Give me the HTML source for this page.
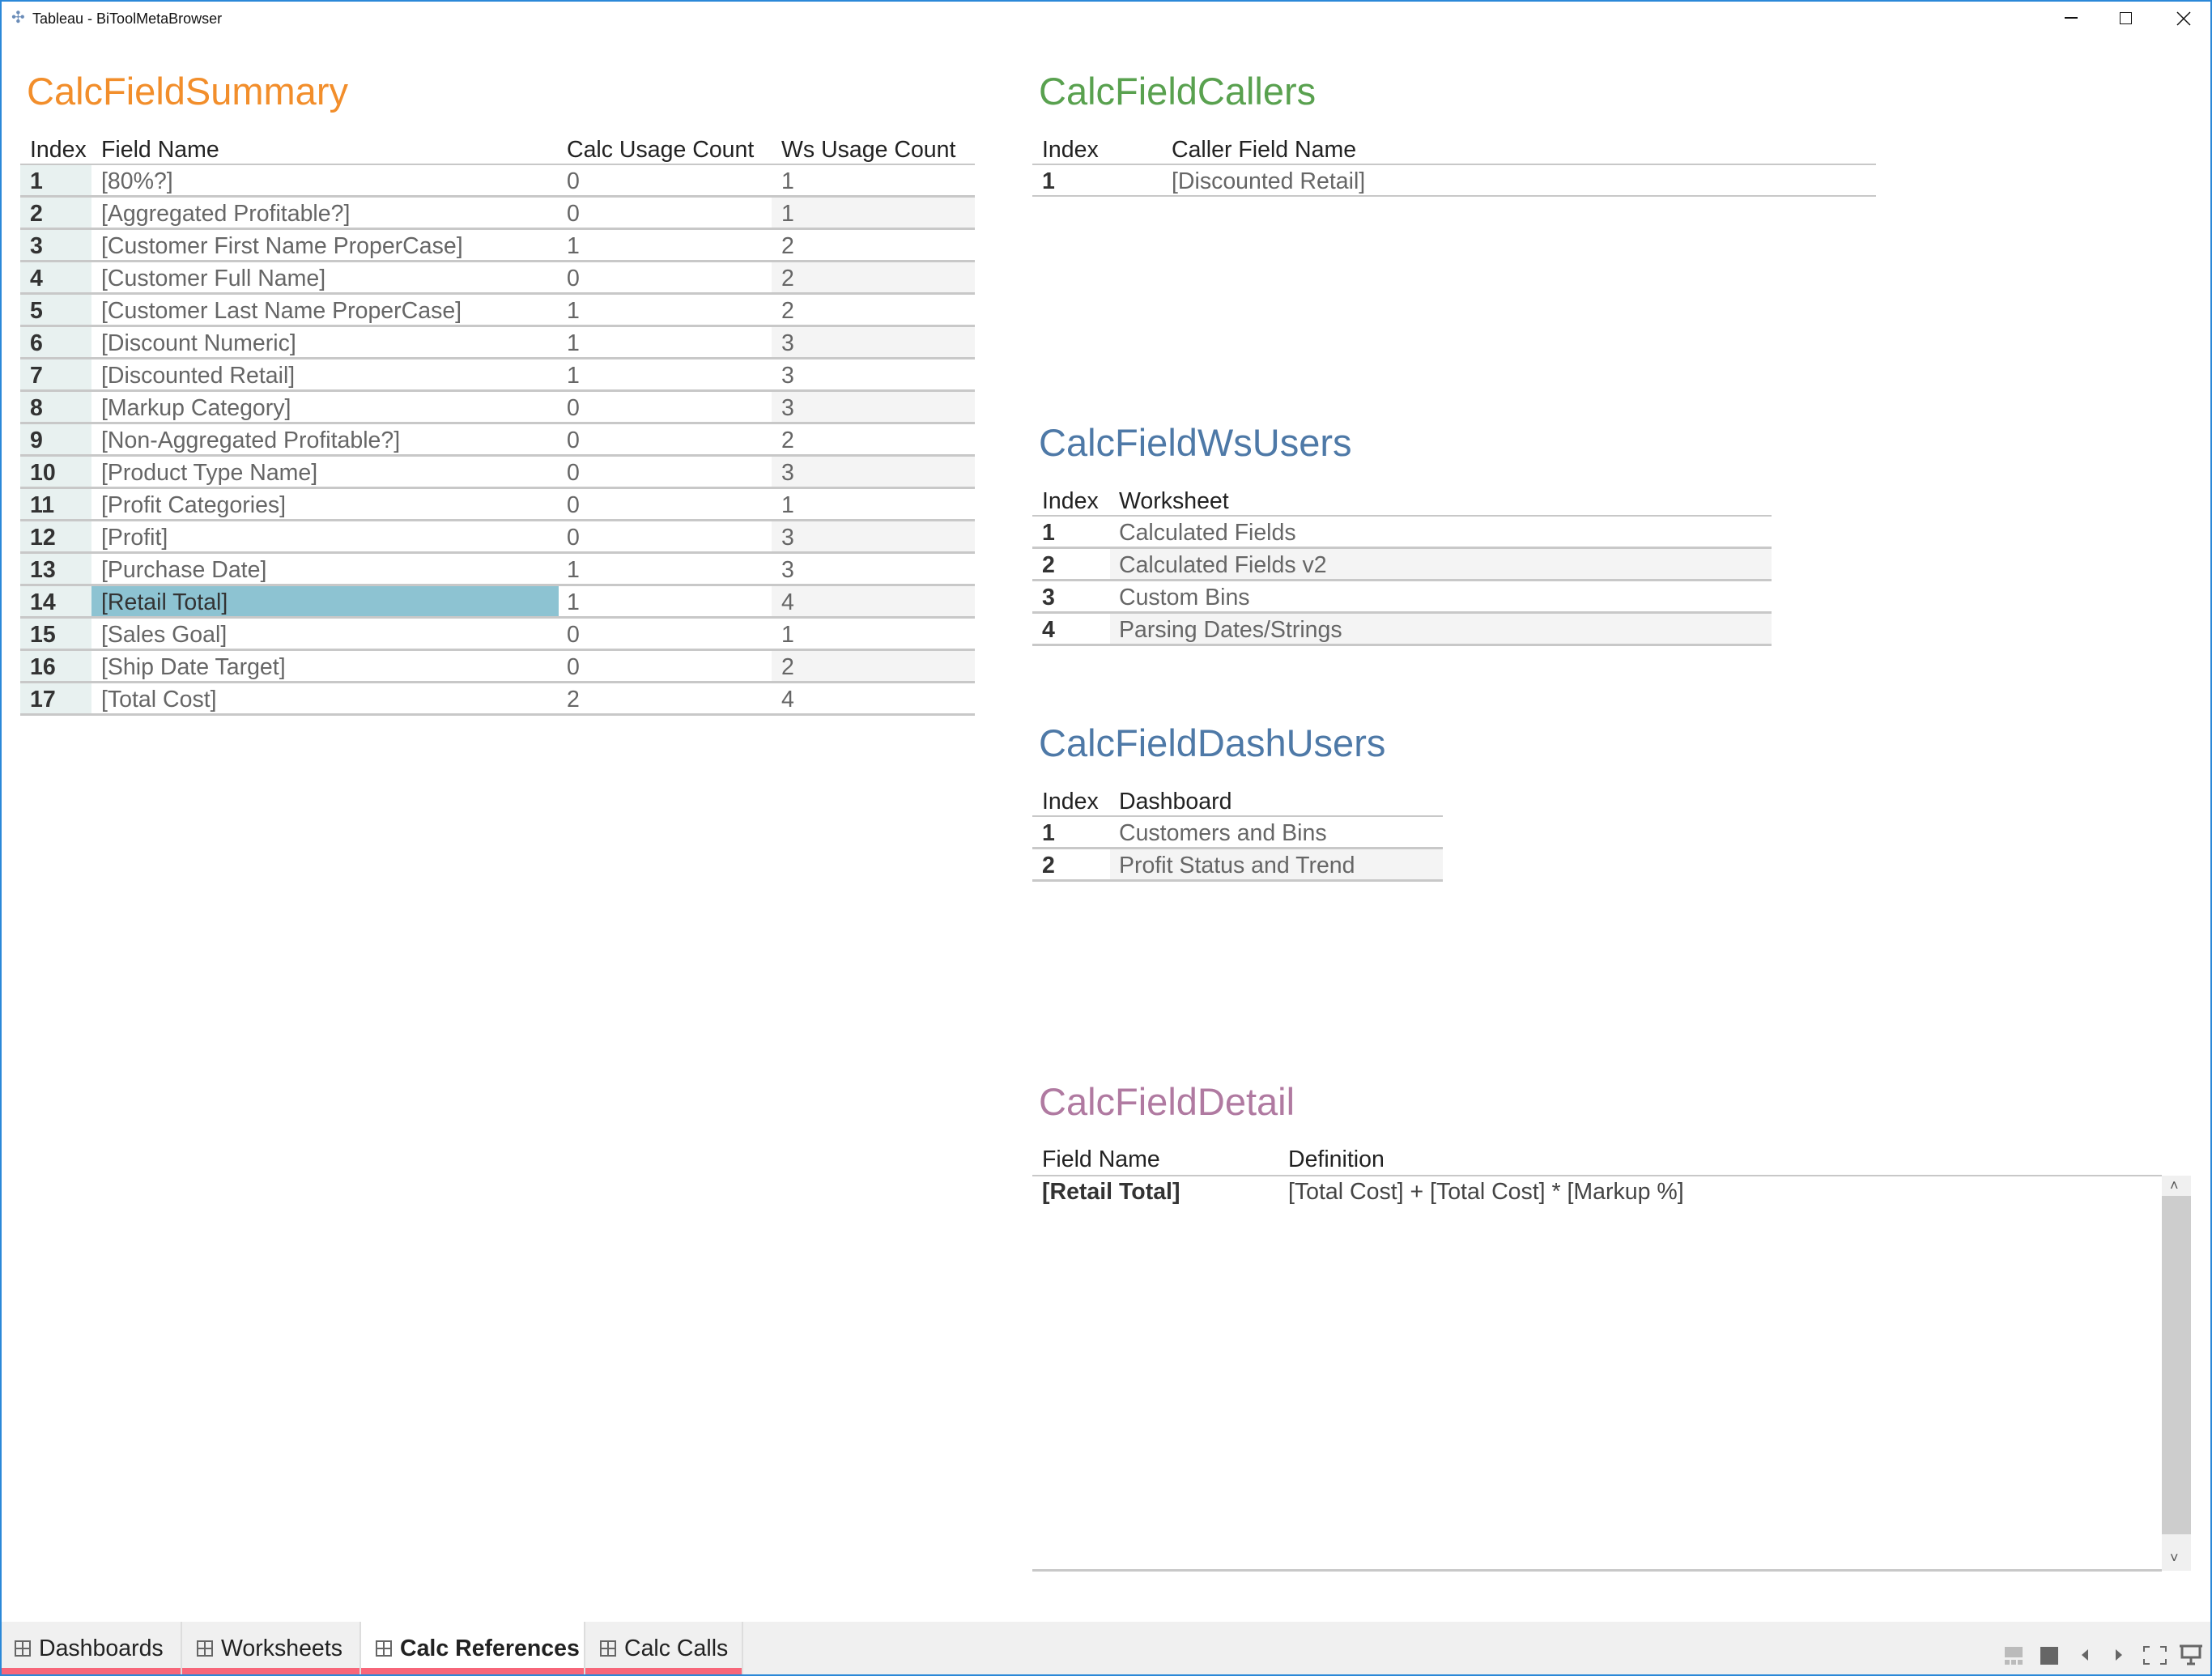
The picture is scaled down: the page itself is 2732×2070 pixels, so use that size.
<!DOCTYPE html>
<html><head><meta charset="utf-8"><style>
*{margin:0;padding:0;box-sizing:border-box}
body{width:2732px;height:2070px;position:relative;background:#fff;font-family:"Liberation Sans",sans-serif;overflow:hidden}
.a{position:absolute;white-space:nowrap}
.t{font-size:47px;line-height:54px}
.h{font-size:28.5px;color:#222;line-height:40px}
.c{font-size:28.5px;color:#666;line-height:40px}
.i{font-size:28.5px;color:#333;line-height:40px;font-weight:bold}
.ln{position:absolute;height:3px;background:#c8c8c8}
.bg{position:absolute}
.tab{position:absolute;top:2003px;height:67px;font-size:28.5px;line-height:66px;color:#222;padding-left:18px}
.tab span.ic{display:inline-block;width:20px;height:20px;border:2px solid #666;vertical-align:-1px;margin-right:10px;background:linear-gradient(#666,#666) 50% 0/2px 100% no-repeat,linear-gradient(#666,#666) 0 50%/100% 2px no-repeat}
</style></head><body>
<!-- title bar -->
<div class="a" style="left:14px;top:11px;width:22px;height:22px;color:#6a8cb8;font-size:20px;line-height:22px">✣</div>
<div class="a" style="left:40px;top:10px;font-size:18px;color:#111;line-height:26px">Tableau - BiToolMetaBrowser</div>
<div class="a" style="left:2550px;top:21px;width:16px;height:1.5px;background:#111"></div>
<div class="a" style="left:2618px;top:15px;width:15px;height:15px;border:1.5px solid #111"></div>
<svg class="a" style="left:2688px;top:14px" width="18" height="18"><path d="M1 1L17 17M17 1L1 17" stroke="#111" stroke-width="1.5"/></svg>

<!-- Summary -->
<div class="a t" style="left:33px;top:86px;color:#f28e2b">CalcFieldSummary</div>
<div class="bg" style="left:25px;top:203px;width:88px;height:680px;background:#e8f1f0"></div>
<div class="bg" style="left:953px;top:243px;width:251px;height:40px;background:#f4f4f4"></div>
<div class="bg" style="left:953px;top:323px;width:251px;height:40px;background:#f4f4f4"></div>
<div class="bg" style="left:953px;top:403px;width:251px;height:40px;background:#f4f4f4"></div>
<div class="bg" style="left:953px;top:483px;width:251px;height:40px;background:#f4f4f4"></div>
<div class="bg" style="left:953px;top:563px;width:251px;height:40px;background:#f4f4f4"></div>
<div class="bg" style="left:953px;top:643px;width:251px;height:40px;background:#f4f4f4"></div>
<div class="bg" style="left:953px;top:723px;width:251px;height:40px;background:#f4f4f4"></div>
<div class="bg" style="left:953px;top:803px;width:251px;height:40px;background:#f4f4f4"></div>
<div class="bg" style="left:113px;top:723px;width:577px;height:40px;background:#8dc3d2"></div>
<div class="a h" style="left:37px;top:165px">Index</div>
<div class="a h" style="left:125px;top:165px">Field Name</div>
<div class="a h" style="left:700px;top:165px">Calc Usage Count</div>
<div class="a h" style="left:965px;top:165px">Ws Usage Count</div>
<div class="ln" style="left:25px;width:1179px;top:202px;height:2px"></div>
<div style="position:absolute;left:0;top:204px">
<div style="position:relative;height:40px"><div class="a i" style="left:37px">1</div><div class="a c" style="left:125px">[80%?]</div><div class="a c" style="left:700px">0</div><div class="a c" style="left:965px">1</div><div class="ln" style="left:25px;width:1179px;top:37px"></div></div>
<div style="position:relative;height:40px"><div class="a i" style="left:37px">2</div><div class="a c" style="left:125px">[Aggregated Profitable?]</div><div class="a c" style="left:700px">0</div><div class="a c" style="left:965px">1</div><div class="ln" style="left:25px;width:1179px;top:37px"></div></div>
<div style="position:relative;height:40px"><div class="a i" style="left:37px">3</div><div class="a c" style="left:125px">[Customer First Name ProperCase]</div><div class="a c" style="left:700px">1</div><div class="a c" style="left:965px">2</div><div class="ln" style="left:25px;width:1179px;top:37px"></div></div>
<div style="position:relative;height:40px"><div class="a i" style="left:37px">4</div><div class="a c" style="left:125px">[Customer Full Name]</div><div class="a c" style="left:700px">0</div><div class="a c" style="left:965px">2</div><div class="ln" style="left:25px;width:1179px;top:37px"></div></div>
<div style="position:relative;height:40px"><div class="a i" style="left:37px">5</div><div class="a c" style="left:125px">[Customer Last Name ProperCase]</div><div class="a c" style="left:700px">1</div><div class="a c" style="left:965px">2</div><div class="ln" style="left:25px;width:1179px;top:37px"></div></div>
<div style="position:relative;height:40px"><div class="a i" style="left:37px">6</div><div class="a c" style="left:125px">[Discount Numeric]</div><div class="a c" style="left:700px">1</div><div class="a c" style="left:965px">3</div><div class="ln" style="left:25px;width:1179px;top:37px"></div></div>
<div style="position:relative;height:40px"><div class="a i" style="left:37px">7</div><div class="a c" style="left:125px">[Discounted Retail]</div><div class="a c" style="left:700px">1</div><div class="a c" style="left:965px">3</div><div class="ln" style="left:25px;width:1179px;top:37px"></div></div>
<div style="position:relative;height:40px"><div class="a i" style="left:37px">8</div><div class="a c" style="left:125px">[Markup Category]</div><div class="a c" style="left:700px">0</div><div class="a c" style="left:965px">3</div><div class="ln" style="left:25px;width:1179px;top:37px"></div></div>
<div style="position:relative;height:40px"><div class="a i" style="left:37px">9</div><div class="a c" style="left:125px">[Non-Aggregated Profitable?]</div><div class="a c" style="left:700px">0</div><div class="a c" style="left:965px">2</div><div class="ln" style="left:25px;width:1179px;top:37px"></div></div>
<div style="position:relative;height:40px"><div class="a i" style="left:37px">10</div><div class="a c" style="left:125px">[Product Type Name]</div><div class="a c" style="left:700px">0</div><div class="a c" style="left:965px">3</div><div class="ln" style="left:25px;width:1179px;top:37px"></div></div>
<div style="position:relative;height:40px"><div class="a i" style="left:37px">11</div><div class="a c" style="left:125px">[Profit Categories]</div><div class="a c" style="left:700px">0</div><div class="a c" style="left:965px">1</div><div class="ln" style="left:25px;width:1179px;top:37px"></div></div>
<div style="position:relative;height:40px"><div class="a i" style="left:37px">12</div><div class="a c" style="left:125px">[Profit]</div><div class="a c" style="left:700px">0</div><div class="a c" style="left:965px">3</div><div class="ln" style="left:25px;width:1179px;top:37px"></div></div>
<div style="position:relative;height:40px"><div class="a i" style="left:37px">13</div><div class="a c" style="left:125px">[Purchase Date]</div><div class="a c" style="left:700px">1</div><div class="a c" style="left:965px">3</div><div class="ln" style="left:25px;width:1179px;top:37px"></div></div>
<div style="position:relative;height:40px"><div class="a i" style="left:37px">14</div><div class="a c" style="left:125px;color:#333">[Retail Total]</div><div class="a c" style="left:700px">1</div><div class="a c" style="left:965px">4</div><div class="ln" style="left:25px;width:1179px;top:37px"></div></div>
<div style="position:relative;height:40px"><div class="a i" style="left:37px">15</div><div class="a c" style="left:125px">[Sales Goal]</div><div class="a c" style="left:700px">0</div><div class="a c" style="left:965px">1</div><div class="ln" style="left:25px;width:1179px;top:37px"></div></div>
<div style="position:relative;height:40px"><div class="a i" style="left:37px">16</div><div class="a c" style="left:125px">[Ship Date Target]</div><div class="a c" style="left:700px">0</div><div class="a c" style="left:965px">2</div><div class="ln" style="left:25px;width:1179px;top:37px"></div></div>
<div style="position:relative;height:40px"><div class="a i" style="left:37px">17</div><div class="a c" style="left:125px">[Total Cost]</div><div class="a c" style="left:700px">2</div><div class="a c" style="left:965px">4</div><div class="ln" style="left:25px;width:1179px;top:37px"></div></div>
</div>

<!-- Callers -->
<div class="a t" style="left:1283px;top:86px;color:#59a14f">CalcFieldCallers</div>
<div class="a h" style="left:1287px;top:165px">Index</div>
<div class="a h" style="left:1447px;top:165px">Caller Field Name</div>
<div class="ln" style="left:1275px;width:1042px;top:202px;height:2px"></div>
<div class="a i" style="left:1287px;top:204px">1</div>
<div class="a c" style="left:1447px;top:204px">[Discounted Retail]</div>
<div class="ln" style="left:1275px;width:1042px;top:241px;height:2px"></div>

<!-- WsUsers -->
<div class="a t" style="left:1283px;top:520px;color:#4e79a7">CalcFieldWsUsers</div>
<div class="bg" style="left:1371px;top:677px;width:817px;height:40px;background:#f4f4f4"></div>
<div class="bg" style="left:1371px;top:757px;width:817px;height:40px;background:#f4f4f4"></div>
<div class="a h" style="left:1287px;top:599px">Index</div>
<div class="a h" style="left:1382px;top:599px">Worksheet</div>
<div class="ln" style="left:1275px;width:913px;top:636px;height:2px"></div>
<div class="a i" style="left:1287px;top:638px">1</div><div class="a c" style="left:1382px;top:638px">Calculated Fields</div>
<div class="ln" style="left:1275px;width:913px;top:675px"></div>
<div class="a i" style="left:1287px;top:678px">2</div><div class="a c" style="left:1382px;top:678px">Calculated Fields v2</div>
<div class="ln" style="left:1275px;width:913px;top:715px"></div>
<div class="a i" style="left:1287px;top:718px">3</div><div class="a c" style="left:1382px;top:718px">Custom Bins</div>
<div class="ln" style="left:1275px;width:913px;top:755px"></div>
<div class="a i" style="left:1287px;top:758px">4</div><div class="a c" style="left:1382px;top:758px">Parsing Dates/Strings</div>
<div class="ln" style="left:1275px;width:913px;top:795px"></div>

<!-- DashUsers -->
<div class="a t" style="left:1283px;top:891px;color:#4e79a7">CalcFieldDashUsers</div>
<div class="bg" style="left:1371px;top:1048px;width:411px;height:40px;background:#f4f4f4"></div>
<div class="a h" style="left:1287px;top:970px">Index</div>
<div class="a h" style="left:1382px;top:970px">Dashboard</div>
<div class="ln" style="left:1275px;width:507px;top:1007px;height:2px"></div>
<div class="a i" style="left:1287px;top:1009px">1</div><div class="a c" style="left:1382px;top:1009px">Customers and Bins</div>
<div class="ln" style="left:1275px;width:507px;top:1046px"></div>
<div class="a i" style="left:1287px;top:1049px">2</div><div class="a c" style="left:1382px;top:1049px">Profit Status and Trend</div>
<div class="ln" style="left:1275px;width:507px;top:1086px"></div>

<!-- Detail -->
<div class="a t" style="left:1283px;top:1334px;color:#b07aa1">CalcFieldDetail</div>
<div class="a h" style="left:1287px;top:1412px">Field Name</div>
<div class="a h" style="left:1591px;top:1412px">Definition</div>
<div class="ln" style="left:1275px;width:1395px;top:1451px;height:2px"></div>
<div class="a i" style="left:1287px;top:1452px">[Retail Total]</div>
<div class="a c" style="left:1591px;top:1452px;color:#444">[Total Cost] + [Total Cost] * [Markup %]</div>
<div class="bg" style="left:2670px;top:1452px;width:36px;height:488px;background:#f0f0f0"></div>
<div class="bg" style="left:2670px;top:1477px;width:36px;height:418px;background:#cdcdcd"></div>
<div class="a" style="left:2680px;top:1452px;font-size:18px;color:#555;line-height:24px">˄</div>
<div class="a" style="left:2680px;top:1912px;font-size:18px;color:#555;line-height:24px">˅</div>
<div class="ln" style="left:1275px;width:1395px;top:1938px"></div>

<!-- tab bar -->
<div class="bg" style="left:0;top:2003px;width:2732px;height:67px;background:#f0f0f0"></div>
<div class="tab" style="left:0;width:223px;background:#f0f0f0"><span class="ic"></span>Dashboards</div>
<div class="tab" style="left:225px;width:219px;background:#f0f0f0"><span class="ic"></span>Worksheets</div>
<div class="tab" style="left:446px;width:275px;background:#fff;font-weight:bold"><span class="ic"></span>Calc References</div>
<div class="tab" style="left:723px;width:193px;background:#f0f0f0"><span class="ic"></span>Calc Calls</div>
<div class="bg" style="left:223px;top:2003px;width:2px;height:67px;background:#ddd"></div>
<div class="bg" style="left:444px;top:2003px;width:2px;height:67px;background:#ddd"></div>
<div class="bg" style="left:721px;top:2003px;width:2px;height:67px;background:#ddd"></div>
<div class="bg" style="left:916px;top:2003px;width:2px;height:67px;background:#ddd"></div>
<div class="bg" style="left:0;top:2060px;width:223px;height:8px;background:#f8667a"></div>
<div class="bg" style="left:225px;top:2060px;width:219px;height:8px;background:#f8667a"></div>
<div class="bg" style="left:446px;top:2060px;width:275px;height:8px;background:#f8667a"></div>
<div class="bg" style="left:723px;top:2060px;width:193px;height:8px;background:#f8667a"></div>
<svg class="a" style="left:2470px;top:2030px" width="262" height="30">
<rect x="6" y="4" width="22" height="13" fill="#bbb"/><rect x="6" y="20" width="6" height="6" fill="#bbb"/><rect x="14" y="20" width="6" height="6" fill="#bbb"/><rect x="22" y="20" width="6" height="6" fill="#bbb"/>
<rect x="50" y="4" width="22" height="22" fill="#666"/>
<path d="M109 7L101 14L109 21Z" fill="#666"/><path d="M143 7L151 14L143 21Z" fill="#666"/>
<path d="M178 10V4H185M198 4H205V10M205 19V25H198M185 25H178V19" stroke="#666" stroke-width="2" fill="none"/>
<path d="M222 3H250M225 4V17H247V4M236 17V25M231 25H241" stroke="#666" stroke-width="3" fill="none"/>
</svg>
<div class="a" style="left:0;top:0;width:2732px;height:2070px;border:2px solid #2b88d8;pointer-events:none"></div>
</body></html>
